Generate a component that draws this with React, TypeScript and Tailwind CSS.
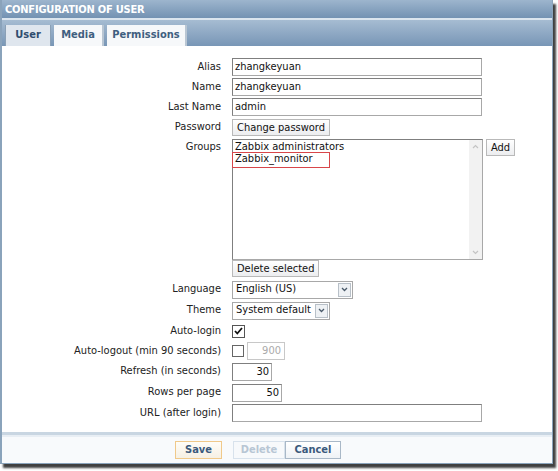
import React from "react";

const font = "font-['Tahoma','DejaVu_Sans_Condensed','DejaVu_Sans',sans-serif]";

const inputClass =
  "h-[18px] border border-[#a8a8a8] border-t-[#7f7f7f] border-l-[#7f7f7f] bg-white px-[2px] text-[11px] leading-[16px] text-[#111] whitespace-nowrap";

const btnClass =
  "h-[17px] border border-[#b9b9b9] bg-gradient-to-b from-white to-[#ecedef] px-[4px] text-[11px] leading-[15px] text-[#111] whitespace-nowrap";

function Row({
  label,
  children,
  className = "h-[20px] items-center",
  inner = "items-center",
}: {
  label: string;
  children?: React.ReactNode;
  className?: string;
  inner?: string;
}) {
  return (
    <div className={`flex ${className}`}>
      <div className="w-[219px] shrink-0 whitespace-nowrap text-right text-[11px] text-[#222]">{label}</div>
      <div className={`ml-[11px] flex gap-[3px] ${inner}`}>{children}</div>
    </div>
  );
}

function SelectBox({ value, width }: { value: string; width: string }) {
  return (
    <div
      className={`flex h-[18px] items-center justify-between border border-[#a8a8a8] bg-white pl-[3px] pr-[1px] text-[11px] text-[#111] ${width}`}
    >
      <span className="whitespace-nowrap">{value}</span>
      <span className="flex h-[14px] w-[13px] shrink-0 items-center justify-center border border-[#b8c0c8] bg-[#eef1f4]">
        <svg width="7" height="5" viewBox="0 0 7 5">
          <path d="M1 1l2.5 2.5L6 1" stroke="#4a5a6a" strokeWidth="1.3" fill="none" />
        </svg>
      </span>
    </div>
  );
}

export default function App() {
  return (
    <div className={`h-[471px] w-[558px] bg-white ${font}`}>
      <div className="w-[553px] border-l-[2px] border-r border-b border-[#8aa3bb] bg-white shadow-[3px_4px_2px_rgba(0,0,0,0.75)]">
        {/* title */}
        <div className="h-[18px] bg-gradient-to-b from-[#9db5cd] to-[#7392b2] pl-[3px] text-[11px] font-bold leading-[19px] tracking-[-0.2px] text-white">
          CONFIGURATION OF USER
        </div>
        <div className="h-[2px] bg-[#dbe5ee]" />
        {/* tabs */}
        <div className="flex h-[26px] items-end gap-[3px] bg-gradient-to-b from-[#a6bcd2] to-[#7896b6] pl-[3px]">
          <div className="flex h-[21px] w-[46px] items-center justify-center border-l border-r border-[#8aa0b6] bg-[#dfe6ee] text-[11px] font-bold text-[#2f4d6e]">
            User
          </div>
          <div className="flex h-[21px] w-[50px] items-center justify-center border-r-2 border-[#b9c6d3] bg-[#f6f8fa] text-[11px] font-bold text-[#3f5f80]">
            Media
          </div>
          <div className="flex h-[21px] w-[80px] items-center justify-center border-r-2 border-[#b9c6d3] bg-[#f6f8fa] text-[11px] font-bold text-[#3f5f80]">
            Permissions
          </div>
        </div>

        {/* form */}
        <div className="flex flex-col pt-[11px] pb-[9px]">
          <Row label="Alias">
            <div className={`${inputClass} w-[250px]`}>zhangkeyuan</div>
          </Row>
          <Row label="Name">
            <div className={`${inputClass} w-[250px]`}>zhangkeyuan</div>
          </Row>
          <Row label="Last Name">
            <div className={`${inputClass} w-[250px]`}>admin</div>
          </Row>
          <Row label="Password">
            <div className={btnClass}>Change password</div>
          </Row>
          <Row label="Groups" className="h-[122px] items-start pt-[2px]" inner="items-start">
            <div className="relative flex h-[121px] w-[251px] border border-[#a8a8a8] border-t-[#7f7f7f] border-l-[#7f7f7f] bg-white">
              <div className="flex-1 pl-[2px] pt-[1px] text-[11px] leading-[12px] text-[#111]">
                <div>Zabbix administrators</div>
                <div>Zabbix_monitor</div>
              </div>
              <div className="flex w-[13px] flex-col items-center justify-between bg-[#f2f2f2] py-[4px]">
                <svg width="7" height="5" viewBox="0 0 7 5">
                  <path d="M1 4l2.5-2.5L6 4" stroke="#c4c4c4" strokeWidth="1.2" fill="none" />
                </svg>
                <svg width="7" height="5" viewBox="0 0 7 5">
                  <path d="M1 1l2.5 2.5L6 1" stroke="#c4c4c4" strokeWidth="1.2" fill="none" />
                </svg>
              </div>
              <div className="absolute left-[-1px] top-[12px] h-[16px] w-[98px] border border-[#d8464a]" />
            </div>
            <div className={btnClass}>Add</div>
          </Row>
          <Row label="" className="h-[20px] items-start pt-[1px]">
            <div className={btnClass}>Delete selected</div>
          </Row>
          <Row label="Language" className="h-[21px] items-center">
            <SelectBox value="English (US)" width="w-[121px]" />
          </Row>
          <Row label="Theme" className="h-[21px] items-center">
            <SelectBox value="System default" width="w-[98px]" />
          </Row>
          <Row label="Auto-login">
            <div className="flex h-[13px] w-[13px] items-center justify-center border border-[#555] bg-white">
              <svg width="9" height="8" viewBox="0 0 9 8">
                <path d="M1 4l2.3 2.5L8 1" stroke="#111" strokeWidth="1.8" fill="none" />
              </svg>
            </div>
          </Row>
          <Row label="Auto-logout (min 90 seconds)" className="h-[20px] items-center">
            <div className="h-[12px] w-[12px] border border-[#666] bg-white" />
            <div className="h-[18px] w-[38px] border border-[#c8c8c8] bg-white pr-[3px] text-right text-[11px] leading-[16px] text-[#aaa]">
              900
            </div>
          </Row>
          <Row label="Refresh (in seconds)" className="h-[21px] items-center">
            <div className={`${inputClass} w-[40px] text-right`}>30</div>
          </Row>
          <Row label="Rows per page" className="h-[21px] items-center">
            <div className={`${inputClass} w-[50px] text-right`}>50</div>
          </Row>
          <Row label="URL (after login)">
            <div className={`${inputClass} w-[250px]`} />
          </Row>
        </div>

        {/* footer */}
        <div className="h-[3px] bg-[#c9d6e2]" />
        <div className="h-[2px] bg-[#e8eef4]" />
        <div className="flex h-[26px] items-center bg-[#f8fafc] pl-[173px]">
          <div className="flex h-[18px] w-[47px] items-center justify-center border border-[#f0c98a] bg-gradient-to-b from-[#fffdf8] to-[#f6f0e4] text-[11px] font-bold text-[#3b5a7c]">
            Save
          </div>
          <div className="ml-[11px] flex h-[18px] w-[52px] items-center justify-center border border-[#d8e2ec] bg-[#f7f9fb] text-[11px] font-bold text-[#b8c6d4]">
            Delete
          </div>
          <div className="flex h-[18px] w-[56px] items-center justify-center border border-[#a9b8c7] bg-gradient-to-b from-white to-[#eef2f6] text-[11px] font-bold text-[#3b5a7c]">
            Cancel
          </div>
        </div>
      </div>
    </div>
  );
}
